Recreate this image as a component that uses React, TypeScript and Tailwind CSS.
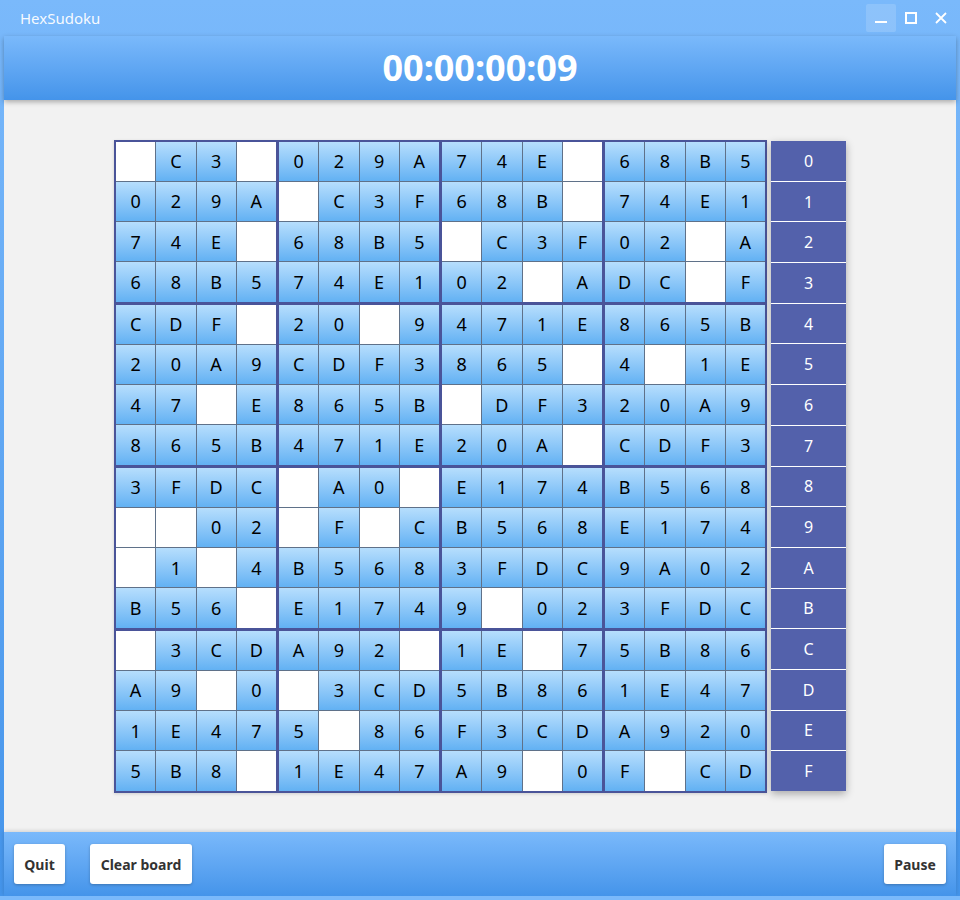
import React from "react";

const BOARD: string[][] = [
  ["", "C", "3", "", "0", "2", "9", "A", "7", "4", "E", "", "6", "8", "B", "5"],
  ["0", "2", "9", "A", "", "C", "3", "F", "6", "8", "B", "", "7", "4", "E", "1"],
  ["7", "4", "E", "", "6", "8", "B", "5", "", "C", "3", "F", "0", "2", "", "A"],
  ["6", "8", "B", "5", "7", "4", "E", "1", "0", "2", "", "A", "D", "C", "", "F"],
  ["C", "D", "F", "", "2", "0", "", "9", "4", "7", "1", "E", "8", "6", "5", "B"],
  ["2", "0", "A", "9", "C", "D", "F", "3", "8", "6", "5", "", "4", "", "1", "E"],
  ["4", "7", "", "E", "8", "6", "5", "B", "", "D", "F", "3", "2", "0", "A", "9"],
  ["8", "6", "5", "B", "4", "7", "1", "E", "2", "0", "A", "", "C", "D", "F", "3"],
  ["3", "F", "D", "C", "", "A", "0", "", "E", "1", "7", "4", "B", "5", "6", "8"],
  ["", "", "0", "2", "", "F", "", "C", "B", "5", "6", "8", "E", "1", "7", "4"],
  ["", "1", "", "4", "B", "5", "6", "8", "3", "F", "D", "C", "9", "A", "0", "2"],
  ["B", "5", "6", "", "E", "1", "7", "4", "9", "", "0", "2", "3", "F", "D", "C"],
  ["", "3", "C", "D", "A", "9", "2", "", "1", "E", "", "7", "5", "B", "8", "6"],
  ["A", "9", "", "0", "", "3", "C", "D", "5", "B", "8", "6", "1", "E", "4", "7"],
  ["1", "E", "4", "7", "5", "", "8", "6", "F", "3", "C", "D", "A", "9", "2", "0"],
  ["5", "B", "8", "", "1", "E", "4", "7", "A", "9", "", "0", "F", "", "C", "D"],
];

const DIGITS = ["0", "1", "2", "3", "4", "5", "6", "7", "8", "9", "A", "B", "C", "D", "E", "F"];

function Cell({ v }: { v: string }) {
  if (!v) return <div className="bg-white" />;
  return (
    <div className="flex items-center justify-center bg-gradient-to-b from-[#b6defd] to-[#62b1f3] text-[18px] text-black leading-none">
      {v}
    </div>
  );
}

function Block({ br, bc }: { br: number; bc: number }) {
  const cells: string[] = [];
  for (let r = 0; r < 4; r++) {
    for (let c = 0; c < 4; c++) cells.push(BOARD[br * 4 + r][bc * 4 + c]);
  }
  return (
    <div className="grid grid-cols-4 grid-rows-4 gap-px bg-[#5f7189] w-[160px] h-[160px]">
      {cells.map((v, i) => (
        <Cell key={i} v={v} />
      ))}
    </div>
  );
}

export default function App() {
  return (
    <div
      className="w-[960px] h-[900px] flex flex-col bg-gradient-to-b from-[#7ab9fb] to-[#4494ea] overflow-hidden"
      style={{ fontFamily: '"Noto Sans", "Open Sans", sans-serif' }}
    >
      {/* Title bar */}
      <div className="h-[36px] flex items-center justify-between shrink-0">
        <span className="pl-[20px] text-[15px] text-white/95">HexSudoku</span>
        <div className="flex items-center h-full pr-[4px]">
          <div className="w-[30px] h-[28px] rounded-[2px] bg-white/15 flex items-center justify-center">
            <div className="w-[12px] h-[2px] bg-white mt-[8px]" />
          </div>
          <div className="w-[30px] h-[28px] flex items-center justify-center">
            <div className="w-[12px] h-[12px] border-2 border-white" />
          </div>
          <div className="w-[30px] h-[28px] flex items-center justify-center">
            <svg width="12" height="12" viewBox="0 0 12 12">
              <path d="M1 1L11 11M11 1L1 11" stroke="white" strokeWidth="1.8" />
            </svg>
          </div>
        </div>
      </div>

      {/* Window body */}
      <div className="mx-[4px] flex flex-col h-[860px]">
        {/* Header */}
        <div className="h-[64px] shrink-0 bg-gradient-to-b from-[#7ab9fb] to-[#4494ea] flex items-center justify-center shadow-[0_2px_5px_rgba(0,0,0,0.3)] relative z-10">
          <span className="text-white font-bold text-[36px] leading-none">00:00:00:09</span>
        </div>

        {/* Board + digit picker */}
        <div className="h-[732px] bg-[#f2f2f2] flex items-center justify-center gap-[4px]">
          <div className="border-2 border-[#4a5499] bg-[#4a5499] grid grid-cols-4 gap-[3px] shadow-[0_1px_3px_rgba(0,0,0,0.15)]">
            {[0, 1, 2, 3].map((br) =>
              [0, 1, 2, 3].map((bc) => <Block key={`${br}-${bc}`} br={br} bc={bc} />)
            )}
          </div>
          <div className="flex flex-col w-[75px] gap-px bg-white shadow-[0_3px_8px_rgba(0,0,0,0.3)]">
            {DIGITS.map((d) => (
              <div
                key={d}
                className="h-[39.7px] bg-[#5361ab] flex items-center justify-center text-white text-[16px]"
              >
                {d}
              </div>
            ))}
          </div>
        </div>

        {/* Footer */}
        <div className="h-[64px] shrink-0 bg-gradient-to-b from-[#7ab9fb] to-[#4494ea] flex items-center px-[10px] shadow-[0_-1px_4px_rgba(0,0,0,0.15)]">
          <button className="h-[40px] w-[51px] bg-white rounded-[3px] text-[#333] font-bold text-[14px] shadow-[0_1px_3px_rgba(0,0,0,0.25)]">
            Quit
          </button>
          <button className="h-[40px] w-[102px] ml-[25px] bg-white rounded-[3px] text-[#333] font-bold text-[14px] shadow-[0_1px_3px_rgba(0,0,0,0.25)]">
            Clear board
          </button>
          <div className="flex-1" />
          <button className="h-[40px] w-[62px] bg-white rounded-[3px] text-[#333] font-bold text-[14px] shadow-[0_1px_3px_rgba(0,0,0,0.25)]">
            Pause
          </button>
        </div>
      </div>
      <div className="h-[4px] bg-[#7ab9fb]" />
    </div>
  );
}
